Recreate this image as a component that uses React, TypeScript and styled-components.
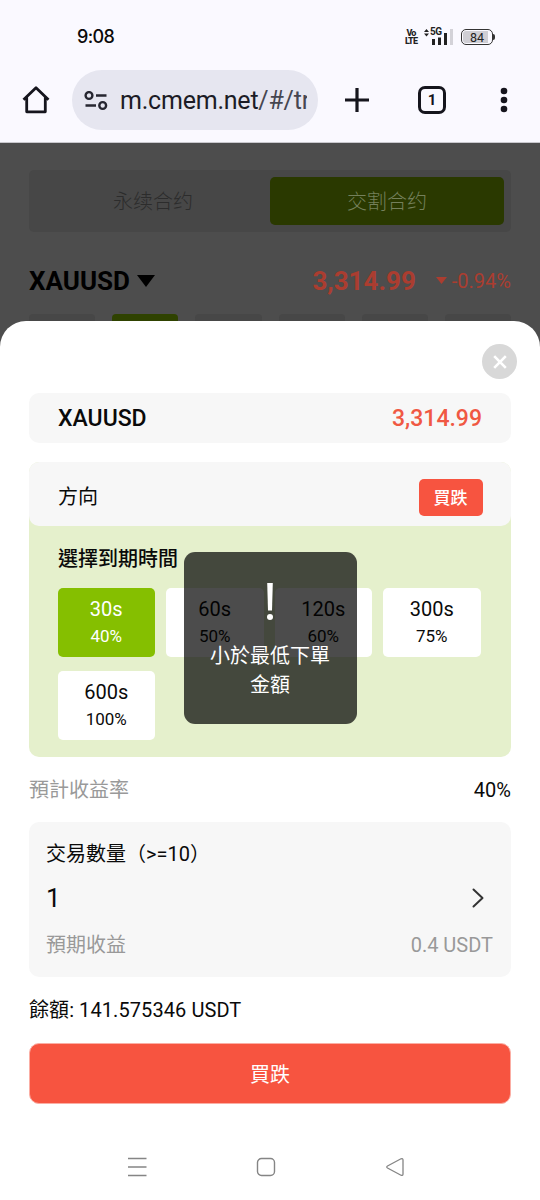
import React from "react";
import styled, { createGlobalStyle } from "styled-components";

const GlobalStyle = createGlobalStyle`
  *, *::before, *::after { box-sizing: border-box; }
  body {
    margin: 0;
    background: #fff;
    color: #0a0a0a;
    font-family: Roboto, "Noto Sans CJK TC", sans-serif;
    font-size: 20px;
    line-height: 28px;
  }
  svg { display: block; flex: none; }
`;

const Screen = styled.div`
  display: flex;
  flex-direction: column;
  width: 540px;
  height: 1200px;
  overflow: hidden;
  background: #4d4d4d;
`;

const BrowserChrome = styled.header`
  height: 143px;
  background: #faf9ff;
  border-bottom: 1px solid #c9c8ce;
`;

const StatusBar = styled.div`
  display: flex;
  align-items: center;
  justify-content: space-between;
  height: 69px;
  padding: 4px 45px 0 77px;
`;

const Clock = styled.time`
  font-family: Inter, sans-serif;
  font-size: 18px;
  font-weight: 500;
  letter-spacing: -0.65px;
`;

const StatusIcons = styled.div`
  display: flex;
  align-items: center;
`;

const Volte = styled.div`
  width: 12px;
  margin-right: 7px;
  font-size: 9px;
  font-weight: 800;
  line-height: 8px;
  letter-spacing: -0.8px;
  text-align: center;
  color: #222;
`;

const Signal = styled.div`
  display: flex;
  position: relative;
  width: 30px;
  height: 17px;
  margin-right: 7px;
`;

const SignalLabel = styled.span`
  position: absolute;
  left: 6px;
  top: -1px;
  font-size: 10px;
  font-weight: 700;
  line-height: 9px;
  letter-spacing: -0.6px;
  color: #222;
`;

const Battery = styled.div`
  display: flex;
  align-items: center;
`;

const BatteryBody = styled.div`
  width: 32px;
  height: 16px;
  padding: 1px;
  border: 1.3px solid #333;
  border-radius: 5px;
`;

const BatteryFill = styled.div`
  width: 25px;
  height: 100%;
  padding-left: 3px;
  border-radius: 3px 0 0 3px;
  background: #cfced4;
  font-size: 12.5px;
  font-weight: 400;
  line-height: 13px;
  text-align: center;
  color: #222;
`;

const BatteryTip = styled.div`
  width: 2px;
  height: 6px;
  border-radius: 0 2px 2px 0;
  background: #333;
`;

const AddressBar = styled.div`
  display: flex;
  align-items: center;
  height: 61px;
  padding: 0 32px 0 21px;
`;

const UrlPill = styled.div`
  display: flex;
  flex: none;
  align-items: center;
  width: 246px;
  height: 60px;
  margin: 0 26px 0 21px;
  padding: 2px 11px 0 12px;
  border-radius: 30px;
  background: #e6e6f0;
`;

const Url = styled.div`
  width: 187px;
  margin-left: 12px;
  overflow: hidden;
  white-space: nowrap;
  font-size: 25px;
  line-height: 34px;
  letter-spacing: -0.22px;
  color: #1c1c26;
`;

const UrlPath = styled.span`
  color: #464650;
`;

const TabCount = styled.div`
  display: flex;
  flex: none;
  align-items: center;
  justify-content: center;
  width: 28px;
  height: 28px;
  margin: 0 54px 0 48px;
  border: 3px solid #15151d;
  border-radius: 7px;
  font-size: 15px;
  font-weight: 700;
  line-height: 20px;
  color: #15151d;
`;

const Market = styled.section`
  height: 178px;
  padding: 27px 29px 0;
  overflow: hidden;
`;

const Tabs = styled.div`
  display: flex;
  height: 62px;
  padding: 7px;
  border-radius: 5px;
  background: #474747;
`;

const Tab = styled.div<{ $active?: boolean }>`
  flex: 1;
  display: flex;
  align-items: center;
  justify-content: center;
  padding-top: 1px;
  border-radius: 5px;
  background: ${(p) => (p.$active ? "#2a3900" : "transparent")};
  color: ${(p) => (p.$active ? "#74805b" : "#2c2c2c")};
  font-family: Roboto, "Noto Sans CJK SC", sans-serif;
  font-weight: 300;
`;

const Quote = styled.div`
  display: flex;
  align-items: center;
  height: 82px;
  padding-top: 15px;
  color: #ab3d30;
`;

const QuoteText = styled.div`
  font-size: 26px;
  font-weight: 700;
  line-height: 32px;
`;

const QuoteName = styled(QuoteText)`
  margin-right: 7px;
  color: #000;
`;

const QuotePrice = styled(QuoteText)`
  margin-left: auto;
  margin-right: 20px;
`;

const Change = styled.div`
  display: flex;
  align-items: center;
  gap: 5px;
`;

const Intervals = styled.div`
  display: flex;
  gap: 17px;
`;

const Interval = styled.div<{ $active?: boolean }>`
  flex: 1;
  height: 40px;
  border-radius: 4px;
  background: ${(p) => (p.$active ? "#2f4200" : "#474747")};
`;

const Sheet = styled.main`
  flex: 1;
  display: flex;
  flex-direction: column;
  padding: 23px 29px 0;
  border-radius: 26px 26px 0 0;
  background: #fff;
`;

const CloseButton = styled.div`
  display: flex;
  align-items: center;
  justify-content: center;
  align-self: flex-end;
  width: 35px;
  height: 35px;
  margin: 0 -6px 14px 0;
  border-radius: 50%;
  background: #d8d8d8;
`;

const Row = styled.div`
  display: flex;
  align-items: center;
  justify-content: space-between;
`;

const SymbolCard = styled(Row)`
  height: 50px;
  padding: 1px 29px 0;
  border-radius: 10px;
  background: #f7f7f7;
  font-size: 23px;
  font-weight: 500;
`;

const Price = styled.span`
  color: #f05843;
`;

const OrderCard = styled.div`
  height: 295px;
  margin-top: 19px;
  border-radius: 10px;
  overflow: hidden;
  background: #e5f0cc;
`;

const Direction = styled(Row)`
  height: 64px;
  padding: 6px 28.5px 0 29px;
  border-radius: 0 0 10px 10px;
  background: #f7f7f7;
`;

const SideBadge = styled.span`
  display: flex;
  align-items: center;
  justify-content: center;
  width: 64px;
  height: 37px;
  padding-top: 2px;
  border-radius: 5px;
  background: #f75440;
  color: #fff;
  font-size: 17px;
  font-weight: 500;
`;

const Label = styled.span`
  margin-top: -1px;
`;

const ExpiryTitle = styled.div`
  padding: 19px 0 15px 29px;
  font-weight: 500;
`;

const ExpiryGrid = styled.div`
  display: grid;
  grid-template-columns: repeat(4, 97.5px);
  gap: 14.5px 11px;
  padding-left: 28.5px;
`;

const Expiry = styled.div<{ $active?: boolean }>`
  height: 68.5px;
  padding-top: 7px;
  border-radius: 5px;
  background: ${(p) => (p.$active ? "#85bf00" : "#fff")};
  color: ${(p) => (p.$active ? "#fff" : "#0a0a0a")};
  text-align: center;
`;

const Rate = styled.div`
  font-size: 17px;
  line-height: 26px;
`;

const Summary = styled(Row)`
  height: 65px;
`;

const Muted = styled.span`
  color: #999;
`;

const AmountCard = styled.div`
  height: 155px;
  padding: 18px 18px 0 17px;
  border-radius: 10px;
  background: #f7f7f7;
`;

const Amount = styled(Row)`
  height: 44px;
  margin: 8px 9px 11px 0;
  font-size: 26px;
`;

const Balance = styled.div`
  margin: 19px 0 19px;
  letter-spacing: 0.08px;
`;

const Submit = styled.button`
  height: 61px;
  padding: 2px 0 0;
  border: 1px solid #fbaea4;
  border-radius: 10px;
  background: #f75440;
  color: #fff;
  font: inherit;
`;

const SystemNav = styled.nav`
  display: flex;
  justify-content: space-between;
  padding: 53px 106px 0 98px;
`;

const Toast = styled.div`
  position: absolute;
  left: 183.5px;
  top: 552px;
  width: 173px;
  height: 172px;
  padding: 31px 20px 0;
  border-radius: 11px;
  background: rgba(0, 0, 0, 0.7);
  color: #fff;
  line-height: 29px;
  text-align: center;
  svg { margin: 0 auto 22px; }
`;

const expiries = [
  ["30s", "40%"],
  ["60s", "50%"],
  ["120s", "60%"],
  ["300s", "75%"],
  ["600s", "100%"],
];

const ink = "#15151d";

export default function App() {
  return (
    <Screen>
      <GlobalStyle />
      <BrowserChrome>
        <StatusBar>
          <Clock>9:08</Clock>
          <StatusIcons>
            <Volte>Vo<br />LTE</Volte>
            <Signal>
              <svg width="30" height="17" viewBox="0 0 30 17">
                <path d="M0 4 L2.5 1 L5 4Z M0 5.500 L2.500 8.500 L5 5.500Z" fill="#222" />
                <path d="M9.500 11v6M15.500 9.500v7.500M21.500 5v12" stroke="#222" strokeWidth="3" />
                <path d="M27.500 1v16" stroke="#d3d2d8" strokeWidth="3" />
              </svg>
              <SignalLabel>5G</SignalLabel>
            </Signal>
            <Battery>
              <BatteryBody><BatteryFill>84</BatteryFill></BatteryBody>
              <BatteryTip />
            </Battery>
          </StatusIcons>
        </StatusBar>
        <AddressBar>
          <svg width="30" height="30" viewBox="0 0 30 30" fill="none" stroke={ink} strokeWidth="2.8" strokeLinejoin="round">
            <path d="M2.5 14.8 L15 2.8 L27.5 14.8 M5.7 12.5 V26.8 H24.3 V12.5" />
          </svg>
          <UrlPill>
            <svg width="24" height="20" viewBox="0 0 24 20" fill="none" stroke="#262630" strokeWidth="2.4">
              <circle cx="5" cy="4.500" r="3.400" /><path d="M12 4.500h10.500M1.500 14.500h10.500" /><circle cx="18.700" cy="14.500" r="3.400" />
            </svg>
            <Url>m.cmem.net<UrlPath>/#/trade</UrlPath></Url>
          </UrlPill>
          <svg width="26" height="26" viewBox="0 0 26 26" stroke={ink} strokeWidth="3.2">
            <path d="M1 13h24M13 1v24" />
          </svg>
          <TabCount>1</TabCount>
          <svg width="8" height="26" viewBox="0 0 8 26" fill={ink}>
            <circle cx="4" cy="4" r="3.3" /><circle cx="4" cy="13" r="3.3" /><circle cx="4" cy="22" r="3.3" />
          </svg>
        </AddressBar>
      </BrowserChrome>

      <Market>
        <Tabs>
          <Tab>永续合约</Tab>
          <Tab $active>交割合约</Tab>
        </Tabs>
        <Quote>
          <QuoteName>XAUUSD</QuoteName>
          <svg width="18" height="12" viewBox="0 0 18 12"><path d="M0 0H18L9 12Z" fill="#000" /></svg>
          <QuotePrice>3,314.99</QuotePrice>
          <Change>
            <svg width="11" height="7" viewBox="0 0 11 7"><path d="M0 0H11L5.5 7Z" fill="#ab3d30" /></svg>
            -0.94%
          </Change>
        </Quote>
        <Intervals>
          <Interval /><Interval $active /><Interval /><Interval /><Interval /><Interval />
        </Intervals>
      </Market>

      <Sheet>
        <CloseButton>
          <svg width="14" height="14" viewBox="0 0 14 14" stroke="#fff" strokeWidth="2.6"><path d="M1.2 1.2 12.8 12.8M12.8 1.2 1.2 12.8" /></svg>
        </CloseButton>
        <SymbolCard><span>XAUUSD</span><Price>3,314.99</Price></SymbolCard>
        <OrderCard>
          <Direction><Label>方向</Label><SideBadge>買跌</SideBadge></Direction>
          <ExpiryTitle>選擇到期時間</ExpiryTitle>
          <ExpiryGrid>
            {expiries.map(([time, rate], i) => (
              <Expiry key={time} $active={i === 0}>{time}<Rate>{rate}</Rate></Expiry>
            ))}
          </ExpiryGrid>
        </OrderCard>
        <Summary><Muted>預計收益率</Muted><span>40%</span></Summary>
        <AmountCard>
          <div>交易數量（&gt;=10）</div>
          <Amount>
            <span>1</span>
            <svg width="12" height="20" viewBox="0 0 12 20" fill="none" stroke="#333" strokeWidth="2" strokeLinecap="round" strokeLinejoin="round"><path d="M1.5 1.5 10.5 10 1.5 18.5" /></svg>
          </Amount>
          <Row><Muted>預期收益</Muted><Muted>0.4 USDT</Muted></Row>
        </AmountCard>
        <Balance>餘額: 141.575346 USDT</Balance>
        <Submit>買跌</Submit>
        <SystemNav>
          <svg width="20" height="20" viewBox="0 0 20 20" stroke="#858585" strokeWidth="1.4"><path d="M1 1.5h18.500M1 10h18.500M1 18.500h18.500" /></svg>
          <svg width="20" height="20" viewBox="0 0 20 20" fill="none" stroke="#858585" strokeWidth="1.4"><rect x="1.500" y="1.500" width="17" height="17" rx="4" /></svg>
          <svg width="20" height="20" viewBox="0 0 20 20" fill="none" stroke="#858585" strokeWidth="1.3"><path d="M2.500 9 16 1.800Q18 1 18 3V17Q18 19 16 18.200L2.500 11Q1 10 2.500 9Z" /></svg>
        </SystemNav>
      </Sheet>

      <Toast role="alert">
        <svg width="10" height="37" viewBox="0 0 10 37" fill="#fff"><path d="M2.200 0h5.600L7 27.500h-4Z" /><circle cx="5" cy="34" r="3" /></svg>
        小於最低下單金額
      </Toast>
    </Screen>
  );
}
